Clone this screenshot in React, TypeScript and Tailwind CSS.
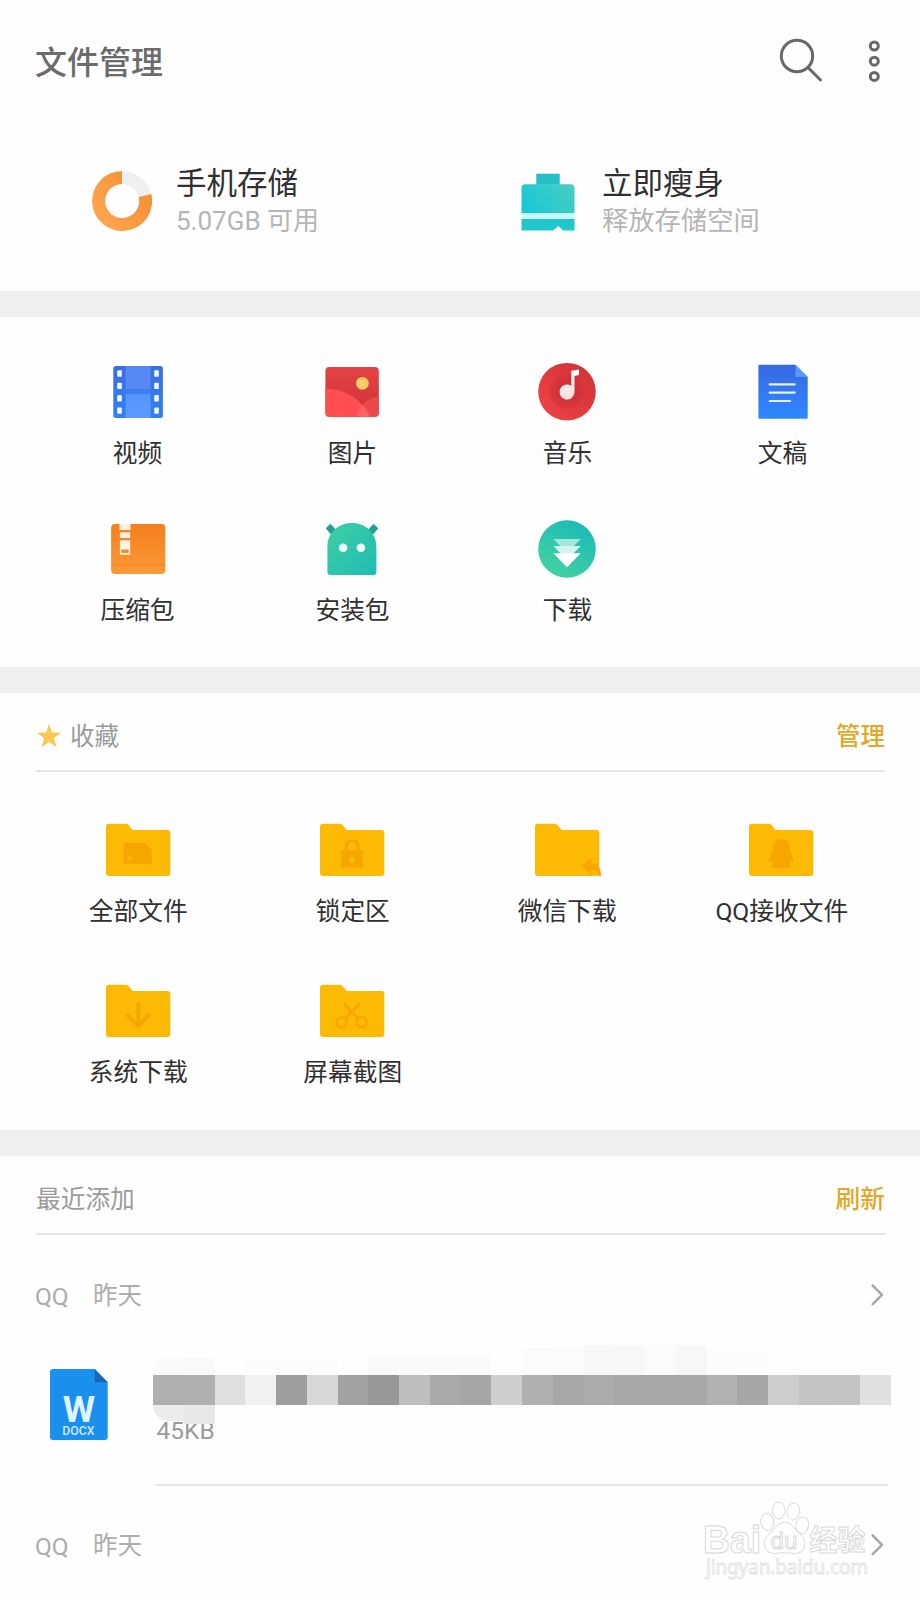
import type { ReactNode } from "react";

function VideoIcon() {
  return (
    <svg width="60" height="60" viewBox="0 0 60 60">
      <defs>
        <linearGradient id="vid" x1="0" y1="0" x2="0" y2="1">
          <stop offset="0" stopColor="#3b6fe3" />
          <stop offset="1" stopColor="#3180f7" />
        </linearGradient>
        <linearGradient id="vid2" x1="0" y1="0" x2="0" y2="1">
          <stop offset="0" stopColor="#5694fb" />
          <stop offset="1" stopColor="#5b9cff" />
        </linearGradient>
      </defs>
      <rect x="5.3" y="4" width="49.6" height="52" rx="2.5" fill="url(#vid)" />
      <rect x="17.6" y="4" width="25" height="23" fill="#5888f2" />
      <rect x="17.6" y="32" width="25" height="24" fill="url(#vid2)" />
      <rect x="17.6" y="27" width="25" height="5" fill="#3a80f2" />
      {[8.3, 20.7, 33.1, 45.4].map((y) => (
        <g key={y} fill="#f3f8ff">
          <rect x="9.2" y={y} width="4.6" height="6.4" rx="0.8" />
          <rect x="46.2" y={y} width="4.6" height="6.4" rx="0.8" />
        </g>
      ))}
    </svg>
  );
}

function ImageIcon() {
  return (
    <svg width="60" height="60" viewBox="0 0 60 60" className="-ml-px">
      <defs>
        <linearGradient id="img" x1="0" y1="0" x2="0" y2="1">
          <stop offset="0" stopColor="#ea4547" />
          <stop offset="0.8" stopColor="#cf3338" />
        </linearGradient>
        <clipPath id="imgc">
          <rect x="3.4" y="5" width="53.4" height="49.8" rx="4" />
        </clipPath>
        <clipPath id="hill">
          <circle cx="5" cy="73.3" r="46.6" />
        </clipPath>
      </defs>
      <g clipPath="url(#imgc)">
        <rect width="60" height="60" fill="url(#img)" />
        <circle cx="58" cy="59" r="24.200" fill="#ec474b" />
        <circle cx="5" cy="73.3" r="46.6" fill="#ff4d51" />
        <circle cx="58" cy="59" r="24.200" fill="#ff6263" clipPath="url(#hill)" />
      </g>
      <circle cx="40.4" cy="21.3" r="6.4" fill="#ffcb62" />
    </svg>
  );
}

function MusicIcon() {
  return (
    <svg width="60" height="60" viewBox="0 0 60 60" className="-ml-px">
      <defs>
        <linearGradient id="mus" x1="1" y1="0" x2="0" y2="1">
          <stop offset="0" stopColor="#cf3237" />
          <stop offset="1" stopColor="#f04346" />
        </linearGradient>
        <linearGradient id="mus2" x1="0" y1="0" x2="0" y2="1">
          <stop offset="0" stopColor="#ffffff" />
          <stop offset="1" stopColor="#fddcdc" />
        </linearGradient>
      </defs>
      <circle cx="30" cy="29.700" r="28.800" fill="url(#mus)" />
      <circle cx="30" cy="29.700" r="17" fill="#cb2f36" fillOpacity="0.5" />
      <circle cx="30" cy="29.700" r="11.500" fill="#b92a31" fillOpacity="0.22" />
      <path
        d="M34.300 8.700l7.700-1.300v5.500l-4.500 1.200v16a7.500 7.500 0 1 1-3.200-6.200z"
        fill="url(#mus2)"
      />
    </svg>
  );
}

function DocIcon() {
  return (
    <svg width="60" height="60" viewBox="0 0 60 60">
      <defs>
        <linearGradient id="doc" x1="0" y1="0" x2="0" y2="1">
          <stop offset="0" stopColor="#3868e2" />
          <stop offset="1" stopColor="#2e89ff" />
        </linearGradient>
      </defs>
      <path d="M6.400 2.700H42.400L54.700 15v40.700a1 1 0 0 1-1 1H6.400a1 1 0 0 1-1-1V3.700a1 1 0 0 1 1-1z" fill="url(#doc)" />
      <path d="M42.400 2.700L54.700 15H42.400z" fill="#5b97fa" />
      <path d="M16.700 22.300H41.700M16.700 30.700H41.700M16.700 39H37" stroke="#e6f1ff" strokeWidth="2.200" strokeLinecap="round" />
    </svg>
  );
}

function ZipIcon() {
  return (
    <svg width="60" height="60" viewBox="0 0 60 60">
      <defs>
        <linearGradient id="zip" x1="0" y1="0" x2="0" y2="1">
          <stop offset="0" stopColor="#f57e1c" />
          <stop offset="1" stopColor="#fb9a38" />
        </linearGradient>
      </defs>
      <rect x="3.100" y="5" width="54.200" height="50" rx="4" fill="url(#zip)" />
      <path d="M3.100 46.300h54.200" stroke="#f18922" strokeWidth="1.200" />
      <path d="M11.500 5h11v6h-11zM11.900 13.300h10.300V19H11.900z" fill="#fff0de" />
      <path d="M11.900 21.300h10.300v14.400H11.900z" fill="#fff3e3" />
      <rect x="13.300" y="30.500" width="7.500" height="3.500" rx="1" fill="#f08a35" />
    </svg>
  );
}

function ApkIcon() {
  return (
    <svg width="60" height="60" viewBox="0 0 60 60" className="-ml-px">
      <defs>
        <linearGradient id="apk" x1="0" y1="0" x2="1" y2="1">
          <stop offset="0.100" stopColor="#3ccda4" />
          <stop offset="1" stopColor="#1fbcb4" />
        </linearGradient>
      </defs>
      <path d="M3.700 9.300l4.700-4.600 7 7.600-5 5zM56.300 9.300l-4.700-4.600-7 7.600 5 5z" fill="#22a295" />
      <path d="M5.400 28C5.400 14 16 4 29.900 4S54.400 14 54.400 28v25a3 3 0 0 1-3 3h-43a3 3 0 0 1-3-3z" fill="url(#apk)" />
      <circle cx="21.100" cy="28.700" r="4.300" fill="#f1fffc" />
      <circle cx="38.900" cy="28.700" r="4.300" fill="#f1fffc" />
    </svg>
  );
}

function DownloadIcon() {
  return (
    <svg width="60" height="60" viewBox="0 0 60 60" className="-ml-px">
      <defs>
        <linearGradient id="dl" x1="0.800" y1="0" x2="0.200" y2="1">
          <stop offset="0.100" stopColor="#1dbcb6" />
          <stop offset="1" stopColor="#47d3a0" />
        </linearGradient>
      </defs>
      <circle cx="30" cy="30" r="28.800" fill="url(#dl)" />
      <path d="M16.300 20h27.400L30 34z" fill="#a3e6dc" />
      <path d="M16.300 27h27.400L30 41z" fill="#d3f4ef" />
      <path d="M16.300 34.200h27.400L30 48.300z" fill="#ffffff" />
    </svg>
  );
}

function Folder({ children }: { children: ReactNode }) {
  return (
    <svg width="66" height="54" viewBox="0 0 66 54" className="-ml-px overflow-visible">
      <path
        d="M4 .7H20.500c1.300 0 2.200.3 3 1.200L27.800 7H62.300a3 3 0 0 1 3 3V50a3 3 0 0 1-3 3H4a3 3 0 0 1-3-3V3.700a3 3 0 0 1 3-3z"
        fill="#fdba04"
      />
      {children}
    </svg>
  );
}

const MARK = "#f7a600";

const categories = [
  { label: "视频", icon: <VideoIcon /> },
  { label: "图片", icon: <ImageIcon /> },
  { label: "音乐", icon: <MusicIcon /> },
  { label: "文稿", icon: <DocIcon /> },
  { label: "压缩包", icon: <ZipIcon /> },
  { label: "安装包", icon: <ApkIcon /> },
  { label: "下载", icon: <DownloadIcon /> },
];

const favourites = [
  {
    label: "全部文件",
    mark: (
      <>
        <path d="M18.600 20H38c2 0 3 .5 4.200 1.600l3.300 3.300c1 1 1.500 2 1.500 3.600v12.200H18.600z" fill={MARK} />
        <path d="M22.800 30.300c1.200 3.700 3.500 5.800 7.400 6.800h-7.400z" fill="#fdba04" />
      </>
    ),
  },
  {
    label: "锁定区",
    mark: (
      <>
        <path d="M27.200 28v-4.700a5.900 5.900 0 0 1 11.800 0V28" fill="none" stroke={MARK} strokeWidth="3" />
        <rect x="22" y="27" width="22" height="17.300" fill={MARK} />
        <path d="M33.100 31.500c1.300 2.700 2.900 4.200 2.900 5.800a2.900 2.900 0 0 1-5.800 0c0-1.600 1.600-3.100 2.900-5.800z" fill="#fdba04" />
      </>
    ),
  },
  {
    label: "微信下载",
    mark: (
      <path d="M47.200 43.300l10.200-7.900v4.500c6.400 0 9.600 4.600 9.600 13.400h-2.200c-1.200-4-3.400-6.300-7.400-6.500v4.800z" fill={MARK} />
    ),
  },
  {
    label: "QQ接收文件",
    mark: (
      <path
        d="M33.300 16c5 0 8.600 3.800 8.900 9l.2 3.500c2 3 3.300 6.500 3.300 10.300-.9.500-1.800 0-2.600-1.300-.4 1.500-1 3-1.900 4.200.9.600 1.700 1.500 1.500 3.100H24c-.2-1.600.6-2.500 1.500-3.100-.9-1.200-1.500-2.700-1.900-4.200-.8 1.300-1.700 1.800-2.600 1.300 0-3.800 1.300-7.300 3.300-10.300l.1-3.500c.3-5.200 3.900-9 8.900-9z"
        fill={MARK}
      />
    ),
  },
  {
    label: "系统下载",
    mark: <path d="M33.200 18.400V42M21.500 30.300L33.200 42 45 30.300" fill="none" stroke={MARK} strokeWidth="3.800" />,
  },
  {
    label: "屏幕截图",
    mark: (
      <g fill="none" stroke={MARK} strokeWidth="2.600">
        <path d="M25 19.500L38.900 34.600M40.800 19.500L26.200 34.600" strokeWidth="3" />
        <circle cx="22.600" cy="38.200" r="5" />
        <circle cx="42.600" cy="38.200" r="5" />
      </g>
    ),
  },
];

const mosaic = [
  { main: "bg-[#afafaf]", top: "bg-[#fafafa] h-[17px] rounded-tl-[24px]", bottom: "bg-[#ececec] h-[16px] rounded-bl-[18px]" },
  { main: "bg-[#b0b0b0]", top: "bg-[#f9f9f9] h-[17px]", bottom: "bg-[#e8e8e8] h-[19px]" },
  { main: "bg-[#dfdfdf]", top: "h-0", bottom: "h-0" },
  { main: "bg-[#f1f1f1]", top: "bg-[#fcfcfc] h-[16px]", bottom: "h-0" },
  { main: "bg-[#9e9e9e]", top: "bg-[#fbfbfb] h-[14px]", bottom: "bg-[#fdfdfd] h-[18px]" },
  { main: "bg-[#d7d7d7]", top: "bg-[#fcfcfc] h-[13px]", bottom: "bg-[#fdfdfd] h-[20px]" },
  { main: "bg-[#a2a2a2]", top: "h-0", bottom: "h-0" },
  { main: "bg-[#989898]", top: "bg-[#f9f9f9] h-[18px]", bottom: "bg-[#fdfdfd] h-[16px]" },
  { main: "bg-[#bebebe]", top: "bg-[#fafafa] h-[18px]", bottom: "bg-[#fdfdfd] h-[18px]" },
  { main: "bg-[#a9a9a9]", top: "bg-[#fafafa] h-[19px]", bottom: "bg-[#fdfdfd] h-[18px]" },
  { main: "bg-[#a5a5a5]", top: "bg-[#fafafa] h-[19px]", bottom: "bg-[#fdfdfd] h-[16px]" },
  { main: "bg-[#cecece]", top: "h-0", bottom: "h-0" },
  { main: "bg-[#b0b0b0]", top: "bg-[#fbfbfb] h-[27px]", bottom: "h-0" },
  { main: "bg-[#a7a7a7]", top: "bg-[#fbfbfb] h-[29px]", bottom: "h-0" },
  { main: "bg-[#acacac]", top: "bg-[#f8f8f8] h-[30px]", bottom: "h-0" },
  { main: "bg-[#a8a8a8]", top: "bg-[#f7f7f7] h-[30px]", bottom: "h-0" },
  { main: "bg-[#a8a8a8]", top: "bg-[#fbfbfb] h-[30px]", bottom: "h-0" },
  { main: "bg-[#a7a7a7]", top: "bg-[#f7f7f7] h-[30px] rounded-tr-[6px]", bottom: "h-0" },
  { main: "bg-[#b1b1b1]", top: "bg-[#fcfcfc] h-[27px]", bottom: "h-0" },
  { main: "bg-[#a6a6a6]", top: "bg-[#fcfcfc] h-[26px]", bottom: "h-0" },
  { main: "bg-[#cdcdcd]", top: "bg-[#fdfdfd] h-[26px]", bottom: "h-0" },
  { main: "bg-[#c4c4c4]", top: "h-0", bottom: "h-0" },
  { main: "bg-[#c3c3c3]", top: "h-0", bottom: "h-0" },
  { main: "bg-[#e0e0e0]", top: "h-0", bottom: "h-0" },
];

function Chevron() {
  return (
    <svg width="14" height="24" viewBox="0 0 14 24" fill="none">
      <path d="M2.700 2.500L12 11.800 2.700 21.100" stroke="#a9a9a9" strokeWidth="2.600" strokeLinecap="round" strokeLinejoin="round" />
    </svg>
  );
}

function RecentHeading() {
  return (
    <div className="flex h-[41px] items-center pr-[36px] pl-[35px] text-[24.500px] text-[#adadad]">
      <span className="w-[58px] pt-[4px] leading-9">QQ</span>
      <span className="flex-1 pt-[3px] leading-9">昨天</span>
      <Chevron />
    </div>
  );
}

function Watermark() {
  return (
    <svg width="180" height="90" viewBox="0 0 180 90" className="absolute top-[1494px] left-[700px]" fill="#ffffff" stroke="#d9d9d9" strokeWidth="1">
      <text x="3" y="58.700" fontSize="38" fontWeight="700" textLength="58" lengthAdjust="spacingAndGlyphs" className="font-['Liberation_Sans',sans-serif]">
        Bai
      </text>
      <ellipse cx="67.300" cy="28" rx="6.400" ry="8.500" transform="rotate(-10 67.300 28)" />
      <ellipse cx="78.700" cy="16.500" rx="6.200" ry="8.500" />
      <ellipse cx="93.300" cy="17.500" rx="6.400" ry="8.500" transform="rotate(10 93.300 17.500)" />
      <ellipse cx="102.300" cy="31.300" rx="6.300" ry="8.300" transform="rotate(10 102.300 31.300)" />
      <path d="M84.600 28.500c6.200 0 9 4.500 12.200 8.300 3.300 3.800 8 6.800 8 12.600 0 6.300-4.500 10.100-9.700 10.100-3.900 0-7-.8-10.500-.8s-6.600.8-10.500.8c-5.200 0-9.700-3.800-9.700-10.100 0-5.800 4.700-8.800 8-12.600 3.200-3.800 6-8.300 12.200-8.300z" />
      <text x="70.500" y="55" fontSize="24" textLength="27" lengthAdjust="spacingAndGlyphs" className="font-['Liberation_Sans',sans-serif]">
        du
      </text>
      <text x="109.500" y="56.500" fontSize="29" fontWeight="700" textLength="56" lengthAdjust="spacingAndGlyphs" className="font-['Noto_Sans_CJK_SC',sans-serif]">
        经验
      </text>
      <text x="6" y="80" fontSize="19" textLength="162" stroke="#e0e0e0" strokeWidth="0.800" className="font-['Noto_Sans',sans-serif]">
        jingyan.baidu.com
      </text>
    </svg>
  );
}

export default function App() {
  return (
    <div className="relative h-[1600px] w-[920px] overflow-hidden bg-[#fefefe] font-['Roboto','Noto_Sans_CJK_SC',sans-serif] text-[#303030]">
      <header className="flex h-[122px] items-center justify-between pr-[34px] pl-[35px]">
        <h1 className="pt-[3px] text-[32px] leading-10 font-medium text-[#6b6b6b]">文件管理</h1>
        <div className="flex items-center gap-[44px]">
          <svg width="48" height="48" viewBox="0 0 48 48" fill="none" stroke="#686868" strokeWidth="3" strokeLinecap="round">
            <circle cx="21" cy="19" r="15.700" />
            <path d="M32.500 31L44.500 43" />
          </svg>
          <svg width="18" height="48" viewBox="0 0 18 48" fill="none" stroke="#686868" strokeWidth="3">
            <circle cx="6.300" cy="9" r="4" />
            <circle cx="6.300" cy="24.200" r="4" />
            <circle cx="6.300" cy="39.400" r="4" />
          </svg>
        </div>
      </header>

      <section className="grid h-[169px] grid-cols-[425px_1fr] pt-[40px] pl-[92px]">
        <div className="flex">
          <svg width="60" height="60" viewBox="0 0 60 60" className="mt-[9px]">
            <defs>
              <linearGradient id="ring" x1="1" y1="0.300" x2="0.200" y2="0.900">
                <stop offset="0" stopColor="#f58e35" />
                <stop offset="1" stopColor="#fda54d" />
              </linearGradient>
            </defs>
            <path d="M30 0A30 30 0 0 1 59 23L46.500 26A17 17 0 0 0 30 13z" fill="#efefef" />
            <path d="M30 0V13A17 17 0 1 0 46.700 26L59.300 23A30 30 0 1 1 30 0z" fill="url(#ring)" />
          </svg>
          <div className="ml-[24px]">
            <div className="text-[30.500px] leading-[44px]">手机存储</div>
            <div className="text-[26px] leading-[30px] text-[#b5b5b5]">5.07GB 可用</div>
          </div>
        </div>
        <div className="flex">
          <svg width="60" height="60" viewBox="0 0 60 60" className="mt-[10px]">
            <defs>
              <linearGradient id="slim" x1="0" y1="0.700" x2="1" y2="0.300">
                <stop offset="0" stopColor="#18c8d5" />
                <stop offset="1" stopColor="#46cdc3" />
              </linearGradient>
            </defs>
            <path d="M19.300 1.700h23.400v11H19.300z" fill="#25bfc5" />
            <path d="M8.500 12.300h45a4 4 0 0 1 4 4v25H4.500v-25a4 4 0 0 1 4-4z" fill="url(#slim)" />
            <path d="M4.500 41h53v6h-53z" fill="#c9f6f7" />
            <path d="M4.500 47h53v11.500H46.300l-5-4.500-5 4.500H4.500z" fill="#22c6cd" />
          </svg>
          <div className="ml-[25px]">
            <div className="text-[30.500px] leading-[44px]">立即瘦身</div>
            <div className="text-[26.300px] leading-[30px] text-[#b5b5b5]">释放存储空间</div>
          </div>
        </div>
      </section>

      <div className="h-[26px] bg-[#efefef]" />

      <section className="grid h-[350px] grid-cols-4 content-start pt-[45px] pr-[30px] pl-[30px]">
        {categories.map((c) => (
          <div key={c.label} className="flex h-[157px] flex-col items-center">
            {c.icon}
            <span className="mt-[14px] text-[24.700px] leading-9">{c.label}</span>
          </div>
        ))}
      </section>

      <div className="h-[26px] bg-[#efefef]" />

      <section className="h-[436.500px]">
        <div className="mr-[35px] ml-[36px] flex h-[79px] items-center border-b-2 border-[#e4e4e4] pt-[8px] text-[24.500px] leading-9">
          <svg width="26" height="26" viewBox="0 0 26 26">
            <path d="M13 .8l2.900 8.800 9.300.1-7.400 5.600 2.700 9-7.500-5.500L5.500 24.300l2.700-9L.8 9.700l9.300-.1z" fill="#fac750" />
          </svg>
          <span className="flex-1 pt-[3px] pl-[8px] text-[#9b9b9b]">收藏</span>
          <span className="pt-[2px] font-medium text-[#e4a829]">管理</span>
        </div>
        <div className="grid grid-cols-4 pt-[51px] pr-[31px] pl-[31px]">
          {favourites.map((f) => (
            <div key={f.label} className="flex h-[161.300px] flex-col items-center">
              <Folder>{f.mark}</Folder>
              <span className="mt-[17px] text-[24.700px] leading-9">{f.label}</span>
            </div>
          ))}
        </div>
      </section>

      <div className="h-[26.500px] bg-[#efefef]" />

      <section>
        <div className="mr-[35px] ml-[36px] flex h-[79px] items-center justify-between border-b-2 border-[#e6e6e6] pt-[10px] text-[24.700px] leading-9">
          <span className="text-[#9b9b9b]">最近添加</span>
          <span className="font-medium text-[#e4a829]">刷新</span>
        </div>
        <div className="pt-[39px]">
          <RecentHeading />
        </div>
        <div className="flex h-[172px] pl-[49px]">
          <svg width="60" height="74" viewBox="0 0 60 74" className="mt-[53px]">
            <path d="M4 1H45.700L58.700 14.300V69a3 3 0 0 1-3 3H4a3 3 0 0 1-3-3V4a3 3 0 0 1 3-3z" fill="#1b8fee" />
            <path d="M45.700 1L58.700 14.300H45.700z" fill="#1569b5" />
            <text x="30" y="53.500" textAnchor="middle" fontSize="37" fontWeight="700" fill="#dff4ff">
              W
            </text>
            <text x="29.300" y="66.700" textAnchor="middle" fontSize="12.300" fontWeight="500" fill="#cdeaff">
              DOCX
            </text>
          </svg>
          <div className="relative ml-[44px] h-[171px] w-[738px]">
            <div className="ml-[2.500px] flex h-[171px] w-[732px] items-start border-b-2 border-[#e6e6e6] pt-[98px] pl-px text-[24.500px] leading-[36px] text-[#9b9b9b]">
              45KB
            </div>
            <div className="absolute top-[29.500px] left-0 flex">
              {mosaic.map((m, i) => (
                <div key={i} className="flex w-[30.750px] flex-col">
                  <div className="flex h-[30px] flex-col justify-end">
                    <div className={m.top} />
                  </div>
                  <div className={`h-[30.500px] ${m.main}`} />
                  <div className={m.bottom} />
                </div>
              ))}
            </div>
          </div>
        </div>
        <div className="pt-[37px]">
          <RecentHeading />
        </div>
      </section>

      <Watermark />
    </div>
  );
}
